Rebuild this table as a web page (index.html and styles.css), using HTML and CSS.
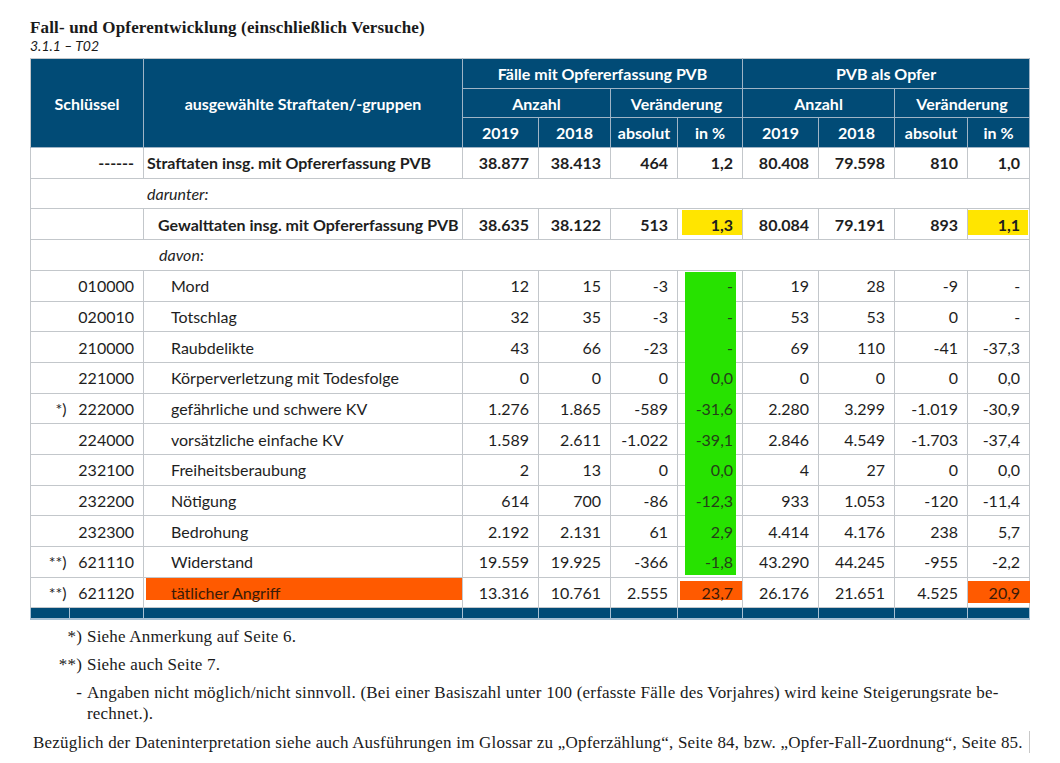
FILE: index.html
```html
<!DOCTYPE html>
<html lang="de">
<head>
<meta charset="utf-8">
<title>Fall- und Opferentwicklung</title>
<link rel="stylesheet" href="styles.css">
</head>
<body>
<div class="page">
  <h1 class="title">Fall- und Opferentwicklung (einschließlich Versuche)</h1>
  <div class="subtitle">3.1.1 – T02</div>
  <table class="data">
    <colgroup>
      <col class="c-mark"><col class="c-key"><col class="c-name">
      <col class="c-a"><col class="c-b"><col class="c-c"><col class="c-d">
      <col class="c-e"><col class="c-f"><col class="c-g"><col class="c-h">
    </colgroup>
    <thead>
      <tr>
        <th colspan="2" rowspan="3">Schlüssel</th>
        <th rowspan="3">ausgewählte Straftaten/-gruppen</th>
        <th colspan="4">Fälle mit Opfererfassung PVB</th>
        <th colspan="4">PVB als Opfer</th>
      </tr>
      <tr>
        <th colspan="2">Anzahl</th><th colspan="2">Veränderung</th>
        <th colspan="2">Anzahl</th><th colspan="2">Veränderung</th>
      </tr>
      <tr>
        <th>2019</th><th>2018</th><th>absolut</th><th>in %</th>
        <th>2019</th><th>2018</th><th>absolut</th><th>in %</th>
      </tr>
    </thead>
    <tbody>
      <tr class="bold">
        <td class="mark"></td><td class="key">------</td><td class="name">Straftaten insg. mit Opfererfassung PVB</td>
        <td class="num">38.877</td><td class="num">38.413</td><td class="num">464</td><td class="num">1,2</td>
        <td class="num">80.408</td><td class="num">79.598</td><td class="num">810</td><td class="num">1,0</td>
      </tr>
      <tr><td colspan="11" class="label l1">darunter:</td></tr>
      <tr class="bold">
        <td class="mark"></td><td class="key"></td><td class="name n2">Gewalttaten insg. mit Opfererfassung PVB</td>
        <td class="num">38.635</td><td class="num">38.122</td><td class="num">513</td><td class="num hl hl-y"><span>1,3</span></td>
        <td class="num">80.084</td><td class="num">79.191</td><td class="num">893</td><td class="num hl hl-y hl-y2"><span>1,1</span></td>
      </tr>
      <tr><td colspan="11" class="label l2">davon:</td></tr>
      <tr>
        <td class="mark"></td><td class="key">010000</td><td class="name n3">Mord</td>
        <td class="num">12</td><td class="num">15</td><td class="num">-3</td><td class="num hl hl-g g-first"><span>-</span></td>
        <td class="num">19</td><td class="num">28</td><td class="num">-9</td><td class="num">-</td>
      </tr>
      <tr>
        <td class="mark"></td><td class="key">020010</td><td class="name n3">Totschlag</td>
        <td class="num">32</td><td class="num">35</td><td class="num">-3</td><td class="num hl hl-g"><span>-</span></td>
        <td class="num">53</td><td class="num">53</td><td class="num">0</td><td class="num">-</td>
      </tr>
      <tr>
        <td class="mark"></td><td class="key">210000</td><td class="name n3">Raubdelikte</td>
        <td class="num">43</td><td class="num">66</td><td class="num">-23</td><td class="num hl hl-g"><span>-</span></td>
        <td class="num">69</td><td class="num">110</td><td class="num">-41</td><td class="num">-37,3</td>
      </tr>
      <tr>
        <td class="mark"></td><td class="key">221000</td><td class="name n3">Körperverletzung mit Todesfolge</td>
        <td class="num">0</td><td class="num">0</td><td class="num">0</td><td class="num hl hl-g"><span>0,0</span></td>
        <td class="num">0</td><td class="num">0</td><td class="num">0</td><td class="num">0,0</td>
      </tr>
      <tr>
        <td class="mark">*)</td><td class="key">222000</td><td class="name n3">gefährliche und schwere KV</td>
        <td class="num">1.276</td><td class="num">1.865</td><td class="num">-589</td><td class="num hl hl-g"><span>-31,6</span></td>
        <td class="num">2.280</td><td class="num">3.299</td><td class="num">-1.019</td><td class="num">-30,9</td>
      </tr>
      <tr>
        <td class="mark"></td><td class="key">224000</td><td class="name n3">vorsätzliche einfache KV</td>
        <td class="num">1.589</td><td class="num">2.611</td><td class="num">-1.022</td><td class="num hl hl-g"><span>-39,1</span></td>
        <td class="num">2.846</td><td class="num">4.549</td><td class="num">-1.703</td><td class="num">-37,4</td>
      </tr>
      <tr>
        <td class="mark"></td><td class="key">232100</td><td class="name n3">Freiheitsberaubung</td>
        <td class="num">2</td><td class="num">13</td><td class="num">0</td><td class="num hl hl-g"><span>0,0</span></td>
        <td class="num">4</td><td class="num">27</td><td class="num">0</td><td class="num">0,0</td>
      </tr>
      <tr>
        <td class="mark"></td><td class="key">232200</td><td class="name n3">Nötigung</td>
        <td class="num">614</td><td class="num">700</td><td class="num">-86</td><td class="num hl hl-g"><span>-12,3</span></td>
        <td class="num">933</td><td class="num">1.053</td><td class="num">-120</td><td class="num">-11,4</td>
      </tr>
      <tr>
        <td class="mark"></td><td class="key">232300</td><td class="name n3">Bedrohung</td>
        <td class="num">2.192</td><td class="num">2.131</td><td class="num">61</td><td class="num hl hl-g"><span>2,9</span></td>
        <td class="num">4.414</td><td class="num">4.176</td><td class="num">238</td><td class="num">5,7</td>
      </tr>
      <tr>
        <td class="mark">**)</td><td class="key">621110</td><td class="name n3">Widerstand</td>
        <td class="num">19.559</td><td class="num">19.925</td><td class="num">-366</td><td class="num hl hl-g g-last"><span>-1,8</span></td>
        <td class="num">43.290</td><td class="num">44.245</td><td class="num">-955</td><td class="num">-2,2</td>
      </tr>
      <tr>
        <td class="mark">**)</td><td class="key">621120</td><td class="name n3 hl hl-o-name"><span>tätlicher Angriff</span></td>
        <td class="num">13.316</td><td class="num">10.761</td><td class="num">2.555</td><td class="num hl hl-o"><span>23,7</span></td>
        <td class="num">26.176</td><td class="num">21.651</td><td class="num">4.525</td><td class="num hl hl-o hl-o2"><span>20,9</span></td>
      </tr>
    </tbody>
    <tfoot>
      <tr class="foot">
        <td></td><td></td><td></td><td></td><td></td><td></td><td></td><td></td><td></td><td></td><td></td>
      </tr>
    </tfoot>
  </table>

  <div class="notes">
    <div class="note"><span class="nm">*)</span><span class="nt">Siehe Anmerkung auf Seite 6.</span></div>
    <div class="note"><span class="nm">**)</span><span class="nt">Siehe auch Seite 7.</span></div>
    <div class="note"><span class="nm">-</span><span class="nt">Angaben nicht möglich/nicht sinnvoll. (Bei einer Basiszahl unter 100 (erfasste Fälle des Vorjahres) wird keine Steigerungsrate be-<br>rechnet.).</span></div>
  </div>
  <p class="ref">Bezüglich der Dateninterpretation siehe auch Ausführungen im Glossar zu „Opferzählung“, Seite 84, bzw. „Opfer-Fall-Zuordnung“, Seite 85.<span class="edge"></span></p>
</div>
</body>
</html>
```

FILE: styles.css
```css
html, body {
  margin: 0;
  padding: 0;
  background: #ffffff;
}

.page {
  padding: 17px 0 0 30px;
  color: #1a1a1a;
}

.title {
  margin: 0;
  font-family: "Liberation Serif", "Times New Roman", serif;
  font-weight: bold;
  font-size: 17px;
  letter-spacing: 0.15px;
  line-height: 21px;
  color: #1a1a1a;
}

.subtitle {
  font-family: "Lato", "Liberation Sans", sans-serif;
  font-style: italic;
  font-size: 14px;
  line-height: 16px;
  height: 20px;
  color: #1a1a1a;
}

.data {
  border-collapse: collapse;
  table-layout: fixed;
  width: 999px;
  font-family: "Lato", "Liberation Sans", sans-serif;
  font-size: 16px;
  color: #1e1e1e;
  border: 1px solid #c3c7cb;
}

.c-mark { width: 39px; }
.c-key { width: 74px; }
.c-name { width: 319px; }
.c-a { width: 76px; }
.c-b { width: 72px; }
.c-c { width: 67px; }
.c-d { width: 65px; }
.c-e { width: 76px; }
.c-f { width: 76px; }
.c-g { width: 73px; }
.c-h { width: 62px; }

.data th {
  background: #014b76;
  color: #ffffff;
  font-weight: bold;
  height: 28.7px;
  padding: 0;
  text-align: center;
  border: 1px solid #9fb4c6;
  border-top-color: #c3c7cb;
}

.data thead tr:first-child th:first-child {
  border-left-color: #c3c7cb;
}

.data td {
  height: 29.7px;
  padding: 0;
  border: 1px solid #c3c7cb;
  white-space: nowrap;
}

.data .bold td {
  font-weight: bold;
}

.data td.mark {
  border-right: none;
  text-align: right;
  padding-right: 3px;
}

.data td.key {
  border-left: none;
  text-align: right;
  padding-right: 9px;
}

.data td.name {
  padding-left: 3px;
}

.data td.n2 {
  padding-left: 14px;
}

.data td.n3 {
  padding-left: 27px;
}

.data td.num {
  text-align: right;
  padding-right: 9px;
}

.data td.label {
  font-style: italic;
  border-left: 1px solid #c3c7cb;
}

.data td.l1 {
  padding-left: 116px;
}

.data td.l2 {
  padding-left: 128px;
}

/* highlight fills */
.data td.hl {
  position: relative;
  z-index: 0;
}

.data td.hl::before {
  content: "";
  position: absolute;
  z-index: -1;
}

.hl-y::before {
  background: #ffe500;
  left: 4px;
  right: 0;
  top: 1px;
  bottom: 4px;
}

.hl-y2::before {
  left: 0;
  right: 1px;
}

.hl-g::before {
  background: #27e200;
  left: 7px;
  right: 6px;
  top: -1px;
  bottom: -1px;
}

.hl-g.g-first::before {
  top: 1px;
}

.hl-g.g-last::before {
  bottom: 2px;
}

.data td.hl-g {
  color: #244018;
}

.hl-o::before {
  background: #ff5a00;
  left: 2px;
  right: 0;
  top: 3px;
  bottom: 7px;
}

.hl-o2::before {
  left: 0;
  right: -1px;
  top: 3px;
  bottom: 4px;
}

.hl-o-name::before {
  background: #ff5a00;
  left: 2px;
  right: 0;
  top: 0;
  bottom: 7px;
}

.data td.hl-o,
.data td.hl-o-name {
  color: #3a1a08;
}

.data tfoot td {
  height: 10px;
  background: #014b76;
  border: 1px solid #a9c0d3;
  border-top: 1px solid #c3c7cb;
  border-bottom: 2px solid #a9c0d3;
}

/* footnotes */
.notes {
  margin-top: 6px;
  font-family: "Liberation Serif", "Times New Roman", serif;
  font-size: 17px;
  letter-spacing: 0.2px;
  line-height: 21px;
  color: #1a1a1a;
}

.note {
  display: grid;
  grid-template-columns: 52px 1fr;
  column-gap: 5px;
  margin-bottom: 7px;
}

.nm {
  text-align: right;
}

.ref {
  margin: 2px 0 0 3px;
  font-family: "Liberation Serif", "Times New Roman", serif;
  font-size: 17px;
  letter-spacing: 0.2px;
  line-height: 21px;
  color: #1a1a1a;
}

.edge {
  display: inline-block;
  width: 1px;
  height: 22px;
  background: #c8c8c8;
  margin-left: 6px;
  vertical-align: -5px;
}
```
